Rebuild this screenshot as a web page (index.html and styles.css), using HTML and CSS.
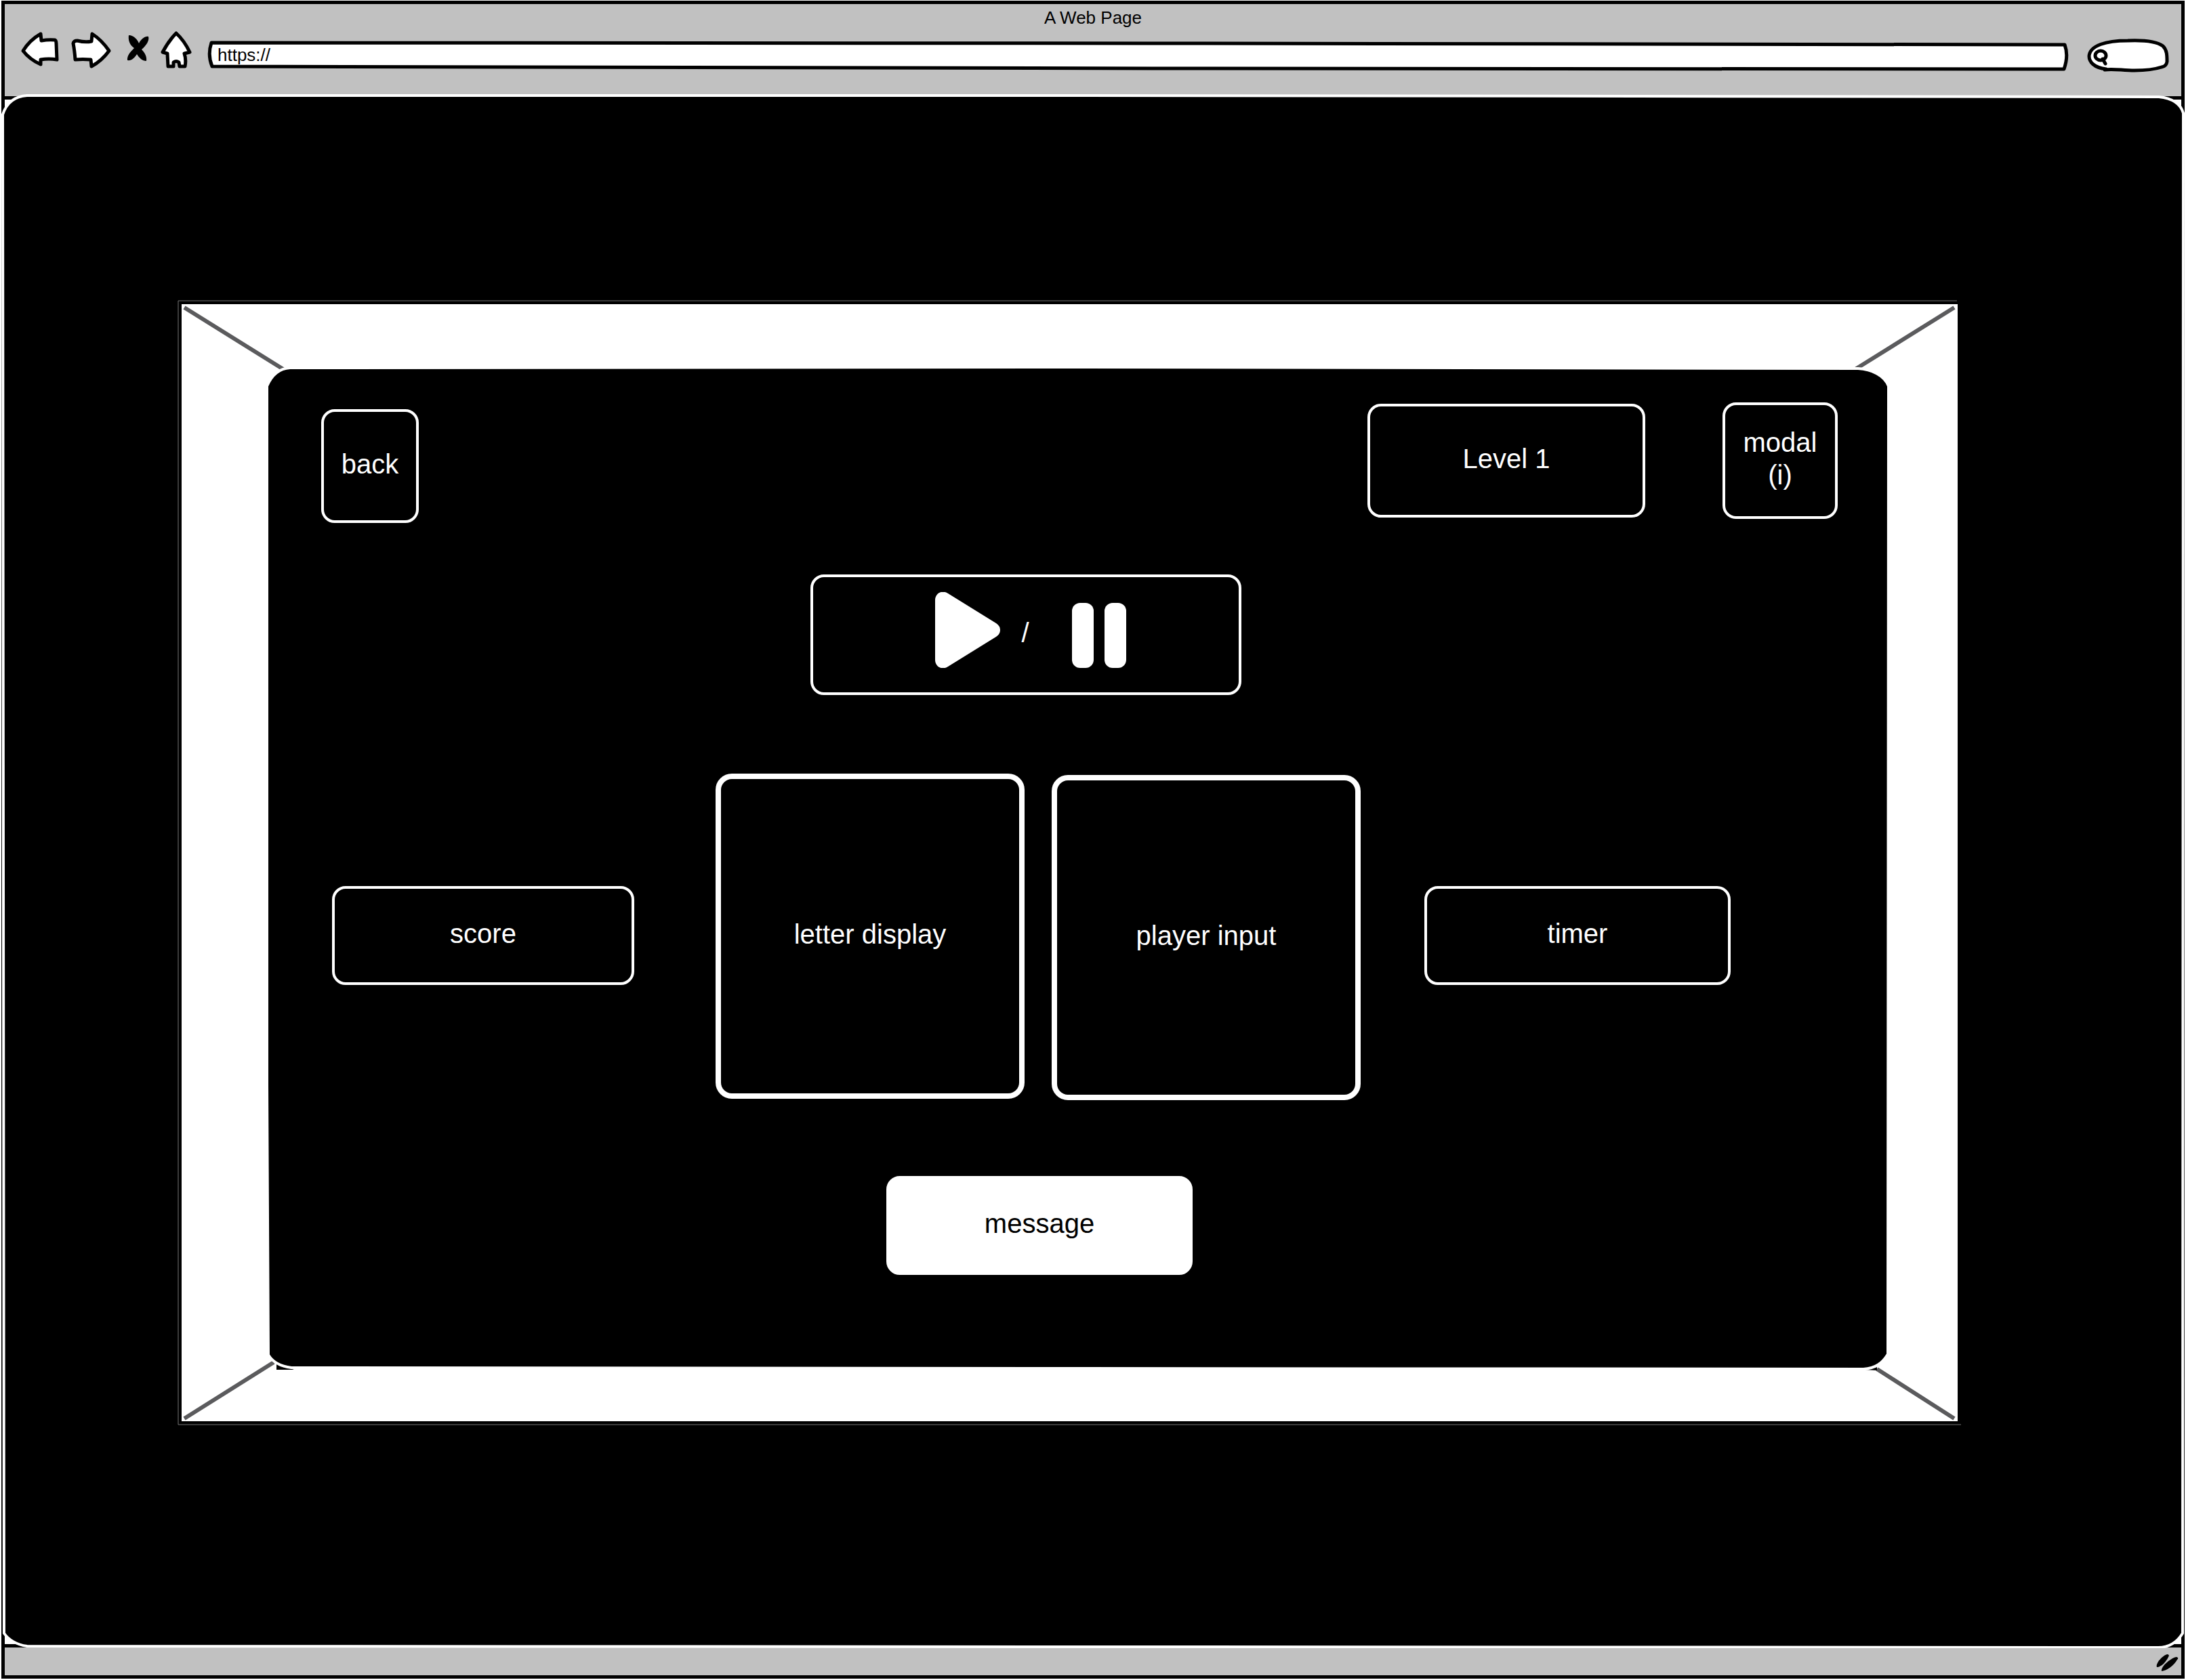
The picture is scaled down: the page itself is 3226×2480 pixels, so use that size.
FILE: index.html
```html
<!DOCTYPE html>
<html lang="en">
<head>
<meta charset="utf-8">
<meta name="viewport" content="width=device-width, initial-scale=1">
<title>A Web Page</title>
<link rel="stylesheet" href="styles.css">
</head>
<body>
<div class="browser">
  <header class="chrome">
    <h1 class="chrome-title">A Web Page</h1>
    <div class="toolbar">
      <button class="tool" type="button" aria-label="Back">
        <svg class="ink" width="62" height="60" viewBox="31 46 62 60"><path d="M34 75 Q44 59 60 50 L61 60 Q72 58 81 59 Q83 60 83 64 L84 88 Q72 86 60 88 L60 95 Q44 88 34 75Z"/></svg>
      </button>
      <button class="tool" type="button" aria-label="Forward">
        <svg class="ink" width="68" height="60" viewBox="105 46 68 60"><path d="M108 64 Q109 60 114 60 Q126 63 135 61 L136 50 Q150 59 161 75 Q150 90 135 98 L134 88 Q122 87 111 88 Q110 74 108 64Z"/></svg>
      </button>
      <button class="tool" type="button" aria-label="Stop">
        <svg width="38" height="60" viewBox="185 46 38 60"><path d="M190 52 C198 52 203 59 205 64 C208 58 214 53 219 54 C221 60 215 68 209 73 C214 78 217 84 216 90 C210 90 205 85 202 80 C198 86 194 90 188 89 C187 82 193 76 198 71 C191 66 189 59 190 52Z"/></svg>
      </button>
      <button class="tool" type="button" aria-label="Home">
        <svg class="ink" width="60" height="60" viewBox="235 46 60 60"><path d="M260 49 Q272 60 280 77 L272 79 Q275 88 273 98 L265 98 L264 92 Q260 89 256 92 L256 98 L248 98 L247 79 L240 77 Q249 60 260 49Z"/></svg>
      </button>
      <label class="field address">
        <svg class="ink field-art" viewBox="307 46 2761 60" preserveAspectRatio="none"><path d="M312 63 L1700 64 L3047 66 Q3053 82 3046 102 L1700 101 L313 98 Q306 81 312 63Z"/></svg>
        <input class="field-input" type="text" value="https://" aria-label="Address">
      </label>
      <label class="field search">
        <svg class="ink field-art" viewBox="3080 46 122 60"><path d="M3108 102 C3090 100 3083 91 3083 83 C3084 67 3108 60 3140 60 C3165 59 3184 62 3192 68 C3198 74 3198 82 3198 91 Q3197 98 3190 99 C3178 103 3160 104 3150 104 C3132 104 3118 101 3106 103"/><ellipse cx="3100" cy="82" rx="8" ry="7"/><path d="M3103 87 L3107 94"/></svg>
        <input class="field-input" type="search" aria-label="Search">
      </label>
    </div>
  </header>

  <main class="page">
    <svg class="page-art" viewBox="0 0 3222 2294" preserveAspectRatio="none"><path d="M38 2 L1600 2 L3184 4 C3203 6 3216 14 3220 28 L3219 2272 C3211 2285 3200 2293 3183 2293 L38 2291 C22 2289 10 2281 4 2272 L2 30 C8 12 20 3 38 2Z"/></svg>

    <div class="frame">
      <svg class="frame-art" viewBox="262 443 2633 1661" preserveAspectRatio="none">
        <path class="hairline" d="M2888 444 H263 V2103 H2894"/>
        <rect class="mat" x="268" y="449" width="2621" height="1649"/>
        <path class="mitre" d="M272 454 L418 545 M2884 454 L2738 545 M272 2094 L404 2011 M2884 2094 L2770 2021"/>
        <path d="M408 2013 V2022 H434 Z M2752 2022 L2770 2018 V2023 Z"/>
        <path class="glass" d="M428 543 L1600 542 L2742 544 C2762 545 2781 554 2787 570 L2786 1999 C2778 2012 2768 2020 2750 2021 L1600 2020 L430 2019 C414 2017 402 2010 396 2000 L394 1600 L394 570 C400 556 410 544 428 543Z"/>
      </svg>

      <div class="game">
        <div class="top-row">
          <button class="box back" type="button">back</button>
          <div class="top-right">
            <div class="box level">Level 1</div>
            <button class="box info" type="button">modal<br>(i)</button>
          </div>
        </div>

        <div class="playback-row">
          <div class="box playback">
            <button class="tool" type="button" aria-label="Play">
              <svg class="solid" width="96" height="112" viewBox="0 0 96 112"><path d="M0 12 C0 2 10 -4 19 2 L90 46 Q96 50 96 56 Q96 62 90 66 L19 110 C10 116 0 110 0 100Z"/></svg>
            </button>
            <span class="slash">/</span>
            <button class="tool" type="button" aria-label="Pause">
              <svg class="solid" width="80" height="96" viewBox="0 0 80 96"><rect width="32" height="96" rx="12"/><rect x="48" width="32" height="96" rx="12"/></svg>
            </button>
          </div>
        </div>

        <div class="board-row">
          <div class="box stat">score</div>
          <div class="boards">
            <div class="box board">letter display</div>
            <input class="box board player" type="text" value="player input" aria-label="Player input">
          </div>
          <div class="box stat">timer</div>
        </div>

        <div class="message-row">
          <output class="box message">message</output>
        </div>
      </div>
    </div>
  </main>

  <footer class="status">
    <svg width="36" height="41" viewBox="3180 2432 36 41"><path d="M3183 2461 C3181 2455 3192 2443 3199 2442 Q3202 2443 3200 2446 C3196 2454 3190 2460 3184 2461Z M3190 2467 C3189 2459 3205 2447 3212 2446 Q3216 2447 3213 2450 C3208 2459 3198 2466 3190 2467Z"/></svg>
  </footer>
</div>
</body>
</html>
```
FILE: styles.css
```css
* {
  box-sizing: border-box;
}

body {
  margin: 0;
  background: #fff;
  color: #000;
  font-family: "Liberation Sans", Arial, sans-serif;
  font-size: 40px;
  line-height: 48px;
}

button,
input {
  margin: 0;
  padding: 0;
  border: 0;
  background: none;
  color: inherit;
  font: inherit;
}

svg {
  display: block;
}

/* Browser window */

.browser {
  display: flex;
  flex-direction: column;
  min-height: calc(100vh - 3px);
  margin: 1px 2px 2px;
  border: 5px solid #000;
}

.chrome {
  padding-bottom: 36px;
  border-bottom: 5px solid #000;
  background: #c1c1c1;
}

.chrome-title {
  margin: 0;
  font-size: 26px;
  font-weight: 400;
  line-height: 40px;
  text-align: center;
}

.toolbar {
  display: flex;
  gap: 12px;
  padding: 0 17px 0 24px;
}

.ink {
  overflow: visible;
  fill: #fff;
  stroke: #000;
  stroke-width: 5px;
  stroke-linecap: round;
  stroke-linejoin: round;
}

.field {
  display: grid;
  height: 60px;
}

.field-art,
.field-input {
  grid-area: 1 / 1;
  width: 100%;
  min-width: 0;
  height: 60px;
}

.field-input {
  padding: 10px 14px 0;
  font-size: 26px;
}

.address {
  flex: 1;
}

.search {
  width: 122px;
}

.search .field-input {
  padding-left: 36px;
}

/* The page overlaps the window's inner lines on all sides */
.page {
  position: relative;
  display: grid;
  flex: 1;
  margin: -8px -5px -6px;
}

.page-art,
.frame {
  grid-area: 1 / 1;
}

.page-art {
  width: 100%;
  height: 100%;
  min-height: 0;
  contain: size;
  fill: #000;
  stroke: #fff;
  stroke-width: 4px;
}

.frame {
  display: grid;
  margin: 304px 329px 329px 260px;
}

.frame-art,
.game {
  grid-area: 1 / 1;
}

.frame-art {
  width: 100%;
  height: 100%;
  contain: size;
}

.hairline {
  fill: none;
  stroke: #777;
  stroke-width: 1px;
}

.mat {
  fill: #fff;
}

.mitre {
  fill: none;
  stroke: #5b5b5d;
  stroke-width: 6px;
}

.glass {
  fill: #000;
  stroke: #fff;
  stroke-width: 4px;
}

.status {
  display: flex;
  justify-content: flex-end;
  padding-right: 3px;
  border-top: 5px solid #000;
  background: #c1c1c1;
}

/* Game */

.game {
  position: relative;
  padding: 151px 183px 222px 212px;
  color: #fff;
}

.box {
  display: flex;
  align-items: center;
  justify-content: center;
  padding-bottom: 6px;
  border: 4px solid #fff;
  border-radius: 20px;
  text-align: center;
}

.top-row {
  display: flex;
  justify-content: space-between;
  min-height: 178px;
}

.back {
  align-self: flex-end;
  width: 144px;
  height: 168px;
}

.top-right {
  display: flex;
  align-items: center;
  align-self: flex-start;
  gap: 114px;
}

.level {
  width: 410px;
  height: 168px;
}

.info {
  width: 170px;
  height: 172px;
}

.playback-row {
  display: flex;
  justify-content: center;
  margin-top: 76px;
  padding-right: 158px;
}

.playback {
  display: grid;
  grid-template-columns: 96px 106px 80px;
  align-items: end;
  justify-content: start;
  width: 636px;
  height: 178px;
  padding: 0 0 36px 180px;
}

.solid {
  fill: #fff;
}

.slash {
  padding: 0 32px 28px 0;
}

.board-row {
  display: grid;
  grid-template-columns: 446px 1fr 452px;
  align-items: center;
  margin-top: 116px;
  padding: 0 158px 0 16px;
}

.stat {
  height: 146px;
  margin-bottom: 4px;
}

.boards {
  display: flex;
  justify-content: center;
  gap: 40px;
  min-height: 482px;
  padding-left: 26px;
}

.board {
  width: 456px;
  height: 480px;
  border-width: 8px;
  border-radius: 24px;
}

.player {
  align-self: flex-end;
}

.message-row {
  display: flex;
  justify-content: center;
  margin-top: 112px;
  padding-right: 118px;
}

.message {
  width: 452px;
  height: 146px;
  background: #fff;
  color: #000;
}
```
